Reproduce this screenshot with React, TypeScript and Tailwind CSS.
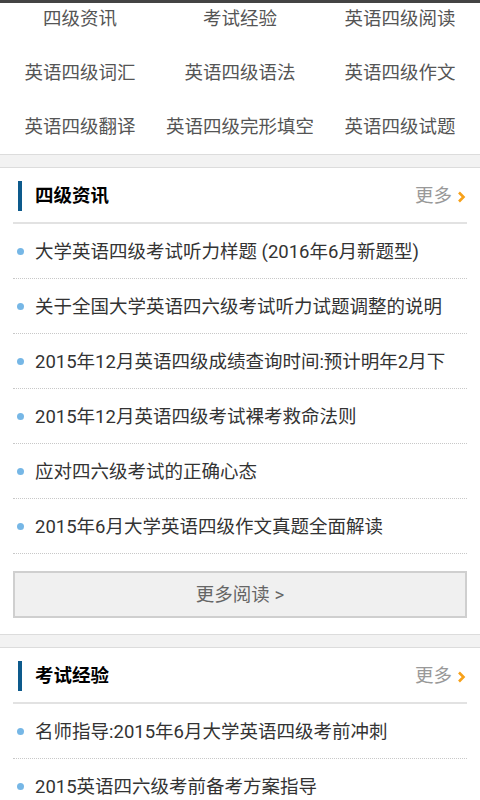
const categories = [
  "四级资讯",
  "考试经验",
  "英语四级阅读",
  "英语四级词汇",
  "英语四级语法",
  "英语四级作文",
  "英语四级翻译",
  "英语四级完形填空",
  "英语四级试题",
];

const sections = [
  {
    title: "四级资讯",
    items: [
      "大学英语四级考试听力样题 (2016年6月新题型)",
      "关于全国大学英语四六级考试听力试题调整的说明",
      "2015年12月英语四级成绩查询时间:预计明年2月下",
      "2015年12月英语四级考试裸考救命法则",
      "应对四六级考试的正确心态",
      "2015年6月大学英语四级作文真题全面解读",
    ],
  },
  {
    title: "考试经验",
    items: [
      "名师指导:2015年6月大学英语四级考前冲刺",
      "2015英语四六级考前备考方案指导",
    ],
  },
];

function Band() {
  return (
    <div className="h-[14px] bg-[#f2f2f2] border-y border-[#dcdcdc]" />
  );
}

function Section({ title, items }: { title: string; items: string[] }) {
  return (
    <div className="bg-white px-[13px]">
      <div className="flex items-center justify-between h-[56px] border-b-2 border-[#e2e2e2]">
        <div className="flex items-center">
          <div className="w-[4px] h-[30px] bg-[#0d5a8c] ml-[5px] mt-[1px]" />
          <span className="ml-[13px] pt-[3px] text-[18.5px] font-bold text-black">
            {title}
          </span>
        </div>
        <div className="flex items-center pt-[3px] text-[18.5px] text-[#999]">
          更多
          <svg
            width="9"
            height="12"
            viewBox="0 0 9 12"
            className="ml-[5px] mr-[1px]"
          >
            <path
              d="M2 1.5 L6.5 6 L2 10.5"
              fill="none"
              stroke="#f7a11a"
              strokeWidth="2.6"
            />
          </svg>
        </div>
      </div>
      {items.map((item) => (
        <div
          key={item}
          className="flex items-center h-[55px] border-b border-dotted border-[#c8c8c8]"
        >
          <span className="w-[7px] h-[7px] rounded-full bg-[#76b7e6] ml-[4px] shrink-0" />
          <span className="ml-[11px] pt-[4px] text-[18.5px] text-[#333] whitespace-nowrap overflow-hidden">
            {item}
          </span>
        </div>
      ))}
      <div className="pt-[17px] pb-[16px]">
        <button className="w-full h-[47px] pt-[3px] bg-[#f0f0f0] border-2 border-[#cfcfcf] text-[18.5px] text-[#666]">
          更多阅读 &gt;
        </button>
      </div>
    </div>
  );
}

export default function App() {
  return (
    <div
      className="w-[480px] h-[800px] overflow-hidden bg-white"
      style={{ fontFamily: 'Roboto, "Noto Sans CJK SC", sans-serif' }}
    >
      <div className="h-[3px] bg-[#444]" />
      <div className="h-[151px] overflow-hidden bg-white">
        <div className="grid grid-cols-3 -mt-[10px]">
          {categories.map((c) => (
            <div
              key={c}
              className="h-[54px] flex items-center justify-center text-[18.5px] text-[#555]"
            >
              {c}
            </div>
          ))}
        </div>
      </div>
      <Band />
      <Section {...sections[0]} />
      <Band />
      <Section {...sections[1]} />
    </div>
  );
}
